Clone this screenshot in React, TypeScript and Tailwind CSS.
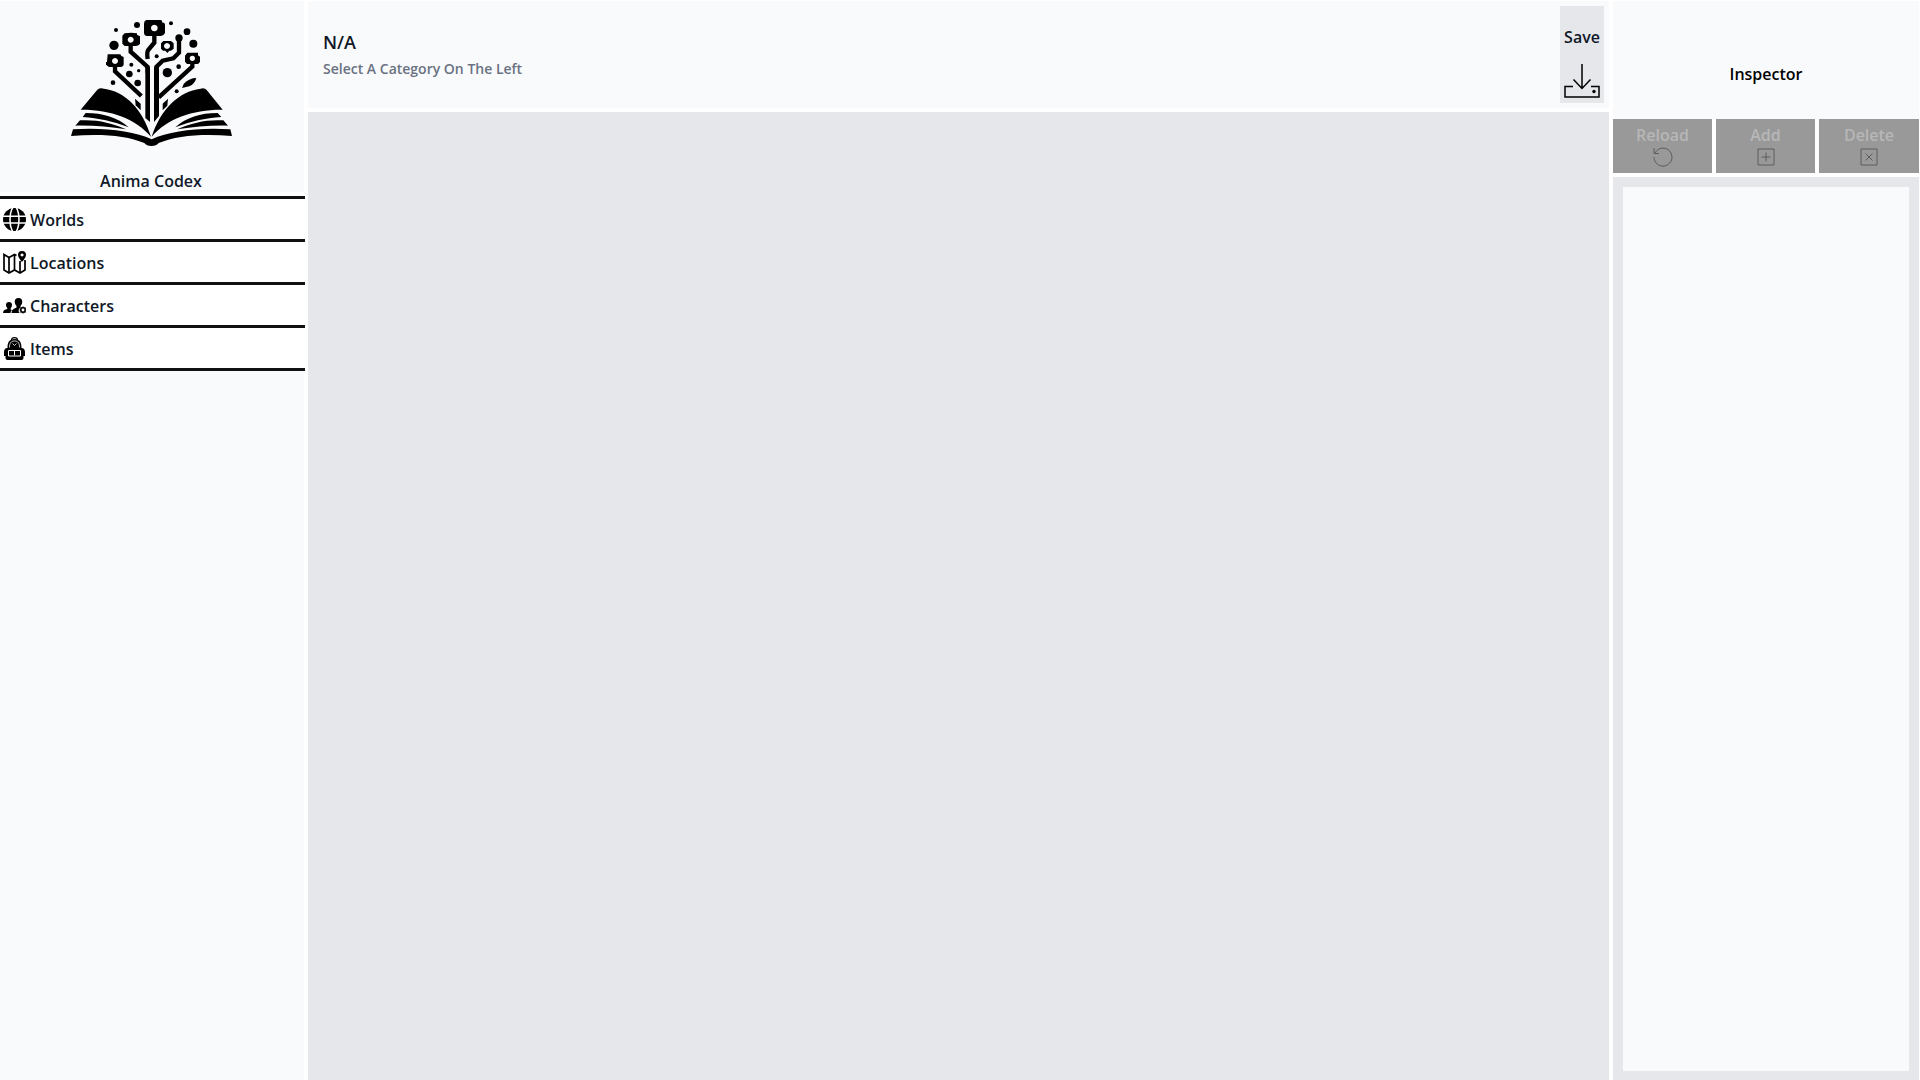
import type { ReactNode } from "react";

function Logo() {
  return (
    <svg viewBox="6 0 540 435" className="h-[145px] w-[180px]" role="img" aria-label="Anima Codex logo">
      <g fill="#000">
        <path d="M62 299 L112 239 Q120 233 132 236 C196 244 248 298 273 380 C226 325 150 298 62 299Z" />
        <path d="M488 299 L440 240 Q434 233 422 236 C356 244 302 298 275 380 C322 325 400 298 488 299Z" />
        <path d="M77 309 C130 309 172 322 206 352 C160 334 115 324 68 321Z" />
        <path d="M473 309 C420 309 380 322 346 352 C392 334 435 324 484 321Z" />
        <path d="M60 331 C110 328 155 338 198 358 C150 350 100 346 46 347Z" />
        <path d="M490 331 C440 328 395 338 352 358 C402 350 450 346 504 347Z" />
        <path d="M39 358 C130 352 220 362 275 388 C330 362 420 352 511 358 L516 378 C430 370 350 376 296 399 Q290 408 274 408 Q260 408 253 399 C200 376 120 370 33 378Z" />
        <path d="M256 166 L270 174 V336 L256 324Z" />
        <path d="M282 174 L297 166 V318 L282 336Z" />
        <path d="M225 266 L242 281 V301 L227 286Z" />
        <path d="M324 266 L308 281 V301 L322 287Z" />
        <path d="M366 234 Q370 218 386 210 Q402 202 409 205 Q404 222 388 229Z" />
        <path fillRule="evenodd" d="M259 30 H304 L308 38 H312 Q315 40 315 45 V69 Q311 77 303 78 H261 Q252 77 252 68 V41 Q252 32 259 30Z M283 44 a10 10 0 1 0 .1 0Z" />
        <path fillRule="evenodd" d="M194 70 Q214 66 231 70 V74 L240 79 V101 Q237 107 228 108 H194 L187 101 V77Z M212 80 a9 9 0 1 0 .1 0Z" />
        <path fillRule="evenodd" d="M143 133 H181 L184 138 L191 141 V163 Q190 171 182 171 H147 L138 164 V156 H141Z M165 144 a9 9 0 1 0 .1 0Z" />
        <path fillRule="evenodd" d="M310 93 H333 L341 100 V116 L333 122 H328 L322 129 L316 122 H309 L303 116 V100Z M321 99 a9 9 0 1 0 .1 0Z" />
        <path fillRule="evenodd" d="M382 128 H414 V136 L420 140 V156 L414 162 H381 L375 155 V137Z M397 137 a8 8 0 1 0 .1 0Z" />
      </g>
      <g fill="none" stroke="#000" strokeWidth="13">
        <path d="M283 76 V98 L264 121 Q260 128 263 147" />
        <path d="M212 105 V125 L263 171 V190" />
        <path d="M165 168 V184 L244 258" />
        <path d="M357 84 V128 L340 145 L308 152 L289 171 V190" />
        <path d="M397 160 V170 L296 262" />
      </g>
      <g fill="#000">
        <circle cx="357" cy="84" r="11" /><circle cx="231" cy="45" r="9" />
        <circle cx="168" cy="60" r="6" /><circle cx="333" cy="40" r="6" />
        <circle cx="381" cy="65" r="10" /><circle cx="400" cy="101" r="12" />
        <circle cx="162" cy="106" r="14" /><circle cx="290" cy="139" r="6" />
        <circle cx="214" cy="164" r="6" /><circle cx="236" cy="182" r="5" />
        <circle cx="208" cy="192" r="10" /><circle cx="233" cy="219" r="10" />
        <circle cx="159" cy="218" r="7" /><circle cx="322" cy="188" r="14" />
        <circle cx="356" cy="170" r="7" /><circle cx="350" cy="244" r="6" />
      </g>
    </svg>
  );
}

function GlobeIcon() {
  return (
    <svg viewBox="0 0 23 23" className="size-[23px]" aria-hidden="true">
      <circle cx="11.5" cy="11.5" r="11.5" />
      <g fill="none" stroke="#fff" strokeWidth="1.6">
        <path d="M0 8.2H23M0 15H23" />
        <path d="M10 -1 C6 5 6 18 10 24M13 -1 C17 5 17 18 13 24" />
      </g>
    </svg>
  );
}

function MapIcon() {
  return (
    <svg viewBox="0 0 23 23" className="size-[23px]" aria-hidden="true">
      <g fill="none" stroke="#000" strokeWidth="1.7">
        <path d="M13.5 4.5 L11.5 3.5 L6 6.5 L1 3.5 V19 L6 22 L11.5 19 L17 22 L22 19 V9" />
        <path d="M6 6.5V22M11.5 3.5V19M17 10V22" />
      </g>
      <path fillRule="evenodd" d="M19 0 a4 4 0 0 1 4 4 C23 6.500 19 11 19 11 C19 11 15 6.500 15 4 a4 4 0 0 1 4-4Z M19 2.500 a1.500 1.500 0 1 0 .1 0Z" />
    </svg>
  );
}

function PeopleIcon() {
  return (
    <svg viewBox="0 0 23 23" className="size-[23px]" aria-hidden="true">
      <path d="M15.500 4 q3.800 0 3.800 3.800 q0 2.500-1.800 4.200 v1.500 a4 4 0 0 0-1 5.500 H8.500 q0-3 2-4 l3-1.500 V12 q-1.800-1.700-1.800-4.200 Q11.700 4 15.500 4Z" />
      <path d="M6 8 q3 0 3 3 q0 2-1.300 3.200 v1.200 l1.300.6 Q7.500 17 7.500 19 H0 q0-2.500 1.800-3.200 L4.300 15 v-1 Q3 13 3 11 Q3 8 6 8Z" />
      <circle cx="20" cy="16" r="2.200" fill="none" stroke="#000" strokeWidth="1.500" />
      <path d="M20 12.500V14M20 18v1.500M16.500 16H18M22 16h1M17.500 13.500l1 1M21.500 17.500l1 1M22.500 13.500l-1 1M18.500 17.500l-1 1" stroke="#000" strokeWidth="1.200" />
    </svg>
  );
}

function BackpackIcon() {
  return (
    <svg viewBox="0 0 23 23" className="size-[23px]" aria-hidden="true">
      <path d="M8.500 3 Q8.500 .7 11.500 .7 Q14.500 .7 14.500 3" fill="none" stroke="#000" strokeWidth="1.200" />
      <path d="M11.500 2 C17 2 18.500 5.500 18.500 11 C21 11 22 13 22 15 V19 H20.500 V21 Q20.500 23 18.500 23 H4.500 Q2.500 23 2.500 21 V19 H1 V15 C1 13 2 11 4.500 11 C4.500 5.500 6 2 11.500 2Z" />
      <path d="M5.500 13.500H17.500V19H5.500ZM11.500 14V18.500" fill="none" stroke="#fff" strokeWidth="1" />
      <path d="M6.500 10.500 C6.500 6 8 4 11.500 4 C15 4 16.500 6 16.500 10.500M9.500 6.500l2 2 2-2" fill="none" stroke="#fff" strokeWidth=".8" />
    </svg>
  );
}

function SaveIcon() {
  return (
    <svg viewBox="0 0 36 34" className="h-[34px] w-9" fill="none" stroke="#000" strokeWidth="1.500" aria-hidden="true">
      <path d="M9 22.500H1V33H35V22.500H27M18 0V24M9.500 15.500L18 24.500L26.500 15.500" />
      <circle cx="30" cy="27.500" r="1.700" fill="#000" stroke="none" />
    </svg>
  );
}

const categories: { name: string; icon: ReactNode }[] = [
  { name: "Worlds", icon: <GlobeIcon /> },
  { name: "Locations", icon: <MapIcon /> },
  { name: "Characters", icon: <PeopleIcon /> },
  { name: "Items", icon: <BackpackIcon /> },
];

const actions: { name: string; icon: ReactNode }[] = [
  { name: "Reload", icon: <path d="M2 6 A9 9 0 1 1 1 10 M1 1V6.500H6" /> },
  { name: "Add", icon: <path d="M2 2H18V18H2ZM10 5.500V14.500M5.500 10H14.500" /> },
  { name: "Delete", icon: <path d="M2 2H18V18H2ZM6.500 6.500L13.500 13.500M13.500 6.500L6.500 13.500" /> },
];

export default function App() {
  return (
    <div className="flex min-h-screen gap-1 bg-white pt-px font-['Open_Sans',sans-serif] text-base font-semibold text-gray-900">
      <nav className="flex w-[304px] shrink-0 flex-col bg-[#f9fafc]">
        <div className="flex flex-col items-center pt-[9px]">
          <Logo />
          <h1 className="mt-[15px] pr-0.5 leading-[22px]">Anima Codex</h1>
        </div>
        <ul className="-mr-px border-t-4 border-white">
          {categories.map((c) => (
            <li key={c.name} className="border-t-[3px] border-[#111] bg-white last:border-b-[3px]">
              <button type="button" className="flex h-10 w-full items-center gap-1 px-[3px] pt-px">
                {c.icon}
                {c.name}
              </button>
            </li>
          ))}
        </ul>
      </nav>
      <main className="flex min-w-0 flex-1 flex-col gap-1">
        <header className="flex items-start justify-between bg-[#f9fafc] py-[5px] pr-[5px] pl-[15px]">
          <div className="pt-6">
            <h2 className="text-lg leading-6">N/A</h2>
            <p className="mt-[5px] text-sm leading-5 text-gray-500">Select A Category On The Left</p>
          </div>
          <button type="button" className="flex h-[97px] w-11 flex-col items-center justify-between bg-[#e6e7eb] pt-5 pb-[5px] leading-[22px]">
            Save
            <SaveIcon />
          </button>
        </header>
        <section className="flex-1 bg-[#e6e7eb]" aria-label="Content" />
      </main>
      <aside className="mr-px flex w-[306px] shrink-0 flex-col bg-[#f9fafc]">
        <h2 className="flex h-[118px] items-center justify-center pt-7 text-black">Inspector</h2>
        <div className="grid grid-cols-[99fr_99fr_100fr] gap-1 border-b-4 border-white bg-white">
          {actions.map((a) => (
            <button key={a.name} type="button" disabled className="flex h-[54px] flex-col items-center bg-[#999] pt-[5px] leading-[22px] text-[#b7b7b8]">
              {a.name}
              <svg viewBox="0 0 20 20" className="mt-px size-5 overflow-visible" fill="none" stroke="#5c5c5c" strokeWidth="1" aria-hidden="true">
                {a.icon}
              </svg>
            </button>
          ))}
        </div>
        <div className="flex flex-1 bg-[#e6e7eb] px-2.5 pt-2.5 pb-[9px]">
          <div className="flex-1 bg-[#f9fafc]" />
        </div>
      </aside>
    </div>
  );
}
